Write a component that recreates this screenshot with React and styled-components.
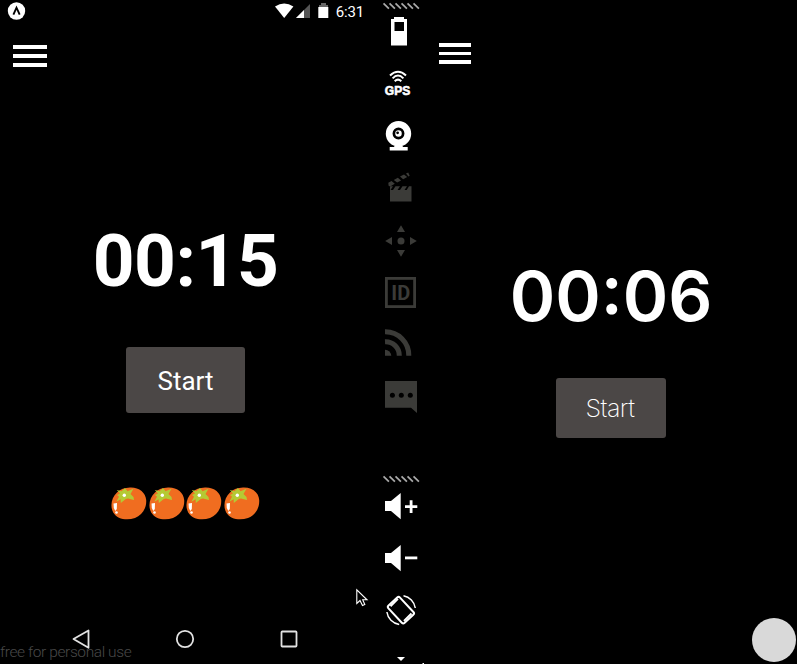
import React from "react";
import styled, { createGlobalStyle } from "styled-components";

const Global = createGlobalStyle`
  * { box-sizing: border-box; }
  body { margin: 0; background: #000; overflow: hidden; }
  svg { display: block; overflow: visible; }
`;

const Desktop = styled.main`
  position: relative;
  display: grid;
  grid-template-columns: 371px 54px 372px;
  width: 797px;
  height: 664px;
  overflow: hidden;
  background: #000;
  color: #fff;
  font-family: Roboto, sans-serif;
`;

const Phone = styled.section`
  display: flex;
  flex-direction: column;
  align-items: center;
  min-width: 0;
`;

const StatusBar = styled.header`
  display: flex;
  justify-content: space-between;
  width: 100%;
  height: 22px;
  padding: 0 7px;
`;

const StatusGroup = styled.div`
  display: flex;
`;

const Clock = styled.span`
  margin-left: 7px;
  font-size: 15px;
  line-height: 24px;
  letter-spacing: -0.15px;
`;

const MenuButton = styled.button`
  display: flex;
  flex-direction: column;
  align-self: flex-start;
  gap: ${(p) => p.$gap}px;
  width: ${(p) => p.$width}px;
  margin: ${(p) => p.$top}px 0 0 ${(p) => p.$left}px;
  padding: 0;
  border: 0;
  background: none;
`;

const MenuLine = styled.span`
  height: 3.7px;
  background: #fff;
`;

const Timer = styled.div`
  margin-top: ${(p) => p.$top}px;
  height: 74px;
  line-height: 74px;
  font-family: ${(p) => p.$font}, sans-serif;
  font-size: ${(p) => p.$size}px;
  font-weight: ${(p) => p.$weight};
  letter-spacing: ${(p) => p.$spacing};
  white-space: nowrap;
`;

const StartButton = styled.button`
  width: ${(p) => p.$width}px;
  height: ${(p) => p.$height}px;
  margin-top: ${(p) => p.$top}px;
  padding: ${(p) => p.$pad};
  border: 0;
  border-radius: 3px;
  background: #4b4746;
  color: #fff;
  font-family: ${(p) => p.$font}, sans-serif;
  font-size: ${(p) => p.$size}px;
  font-weight: ${(p) => p.$weight};
  letter-spacing: ${(p) => p.$spacing}px;
`;

const Tomatoes = styled.div`
  display: flex;
  gap: 1.5px;
  height: 33px;
  margin-top: 74px;
`;

const NavBar = styled.nav`
  display: flex;
  justify-content: space-between;
  width: 228px;
  height: 20px;
  margin: 109px 1px 0 0;
`;

const Watermark = styled.span`
  position: absolute;
  left: 0;
  bottom: 2px;
  color: #484848;
  font-size: 15.5px;
  font-weight: 300;
  line-height: 20px;
  letter-spacing: -0.4px;
  white-space: nowrap;
`;

const Toolbar = styled.aside`
  display: flex;
  flex-direction: column;
  min-width: 0;
`;

const GripSvg = styled.svg`
  flex: none;
  margin-top: ${(p) => p.$top || 0}px;
`;

const Cell = styled.svg.attrs({ width: 54, height: 52, viewBox: "0 0 54 52" })`
  flex: none;
  color: ${(p) => (p.$dim ? "#3b3b38" : "#fff")};
  fill: currentColor;
`;

const AssistiveTouch = styled.div`
  position: absolute;
  right: 1px;
  bottom: 2px;
  width: 44px;
  height: 44px;
  border-radius: 50%;
  background: #d9d9d9;
`;

const Cursor = styled.svg`
  position: absolute;
  left: 356px;
  top: 589px;
`;

const Menu = (props) => (
  <MenuButton aria-label="Menu" {...props}>
    <MenuLine />
    <MenuLine />
    <MenuLine />
  </MenuButton>
);

const Grip = ({ top, height }) => (
  <GripSvg $top={top} width="54" height={height} viewBox={`0 0 54 ${height}`}>
    {[0, 1, 2, 3, 4, 5].map((i) => (
      <path key={i} d={`M${12.5 + i * 6} 3.3l5.4 5.4`} stroke="#aaa" strokeWidth="1.7" />
    ))}
  </GripSvg>
);

const Tomato = () => (
  <svg width="36" height="33" viewBox="0 0 36 33">
    <path d="M19 .5C28 .1 34.7 5.500 35.200 13C35.700 21.500 31 28 24 31C15.500 34 6 32 2.200 25.500C-1.200 19 .5 10.500 6 5.500C9.500 2.200 13.500 .8 19 .5Z" fill="#f06d20" />
    <path d="M5.800 3L10.500 4.300L14 1L16.500 4.200L22.500 1.800L19.500 7L22.500 10L23 13L17 11.400L14.800 12L9.800 16L9.600 12.300L5.300 14.800L8 9.800L6 8L9 6.500Z" fill="#b5c934" />
    <circle cx="13.300" cy="8.200" r="1.700" fill="#fff" />
    <path d="M2.500 16.500L6 16L5.800 22L4.300 24L2.800 21Z" fill="#fff" />
    <circle cx="5.500" cy="25.500" r="1.300" fill="#fff" />
  </svg>
);

const Speaker = () => <path d="M14 21h6l9.7-8v26.3l-9.7-8.3h-6z" />;

export default function App() {
  return (
    <>
      <Global />
      <Desktop>
        <Phone>
          <StatusBar>
            <svg width="19" height="22" viewBox="0 0 19 22">
              <circle cx="9.5" cy="11" r="8.7" fill="#fff" />
              <path d="M6.4 14.6L9.5 7.7L12.7 14.6" fill="none" stroke="#000" strokeWidth="1.9" />
            </svg>
            <StatusGroup>
              <svg width="54" height="22" viewBox="0 0 54 22" fill="#fff">
                <path d="M0 6.500Q9.200 .5 18.400 6.500L9.200 18Z" />
                <path d="M35 4V18H21Z" fill="#555" />
                <path d="M29 10V18H21Z" />
                <path d="M46 3h5v2h2v3H44V5h2z" fill="#666" />
                <path d="M43.300 7h10v11h-10z" />
              </svg>
              <Clock>6:31</Clock>
            </StatusGroup>
          </StatusBar>
          <Menu $top={23} $left={13} $width={34} $gap={5.3} />
          <Timer $top={157} $font="Roboto" $size={73} $weight={700} $spacing="-0.5px">00:15</Timer>
          <StartButton $width={119} $height={66} $top={49} $pad="3px 0 0" $font="Roboto" $size={26} $weight={400} $spacing={0}>
            Start
          </StartButton>
          <Tomatoes>
            <Tomato />
            <Tomato />
            <Tomato />
            <Tomato />
          </Tomatoes>
          <NavBar>
            <svg width="20" height="20" viewBox="0 0 20 20" fill="none" stroke="#e2e2e2" strokeWidth="1.8" strokeLinejoin="round">
              <path d="M2.500 10L17.500 1.500V18.800Z" />
            </svg>
            <svg width="20" height="20" viewBox="0 0 20 20" fill="none" stroke="#e2e2e2" strokeWidth="1.8">
              <circle cx="10" cy="10" r="8.2" />
            </svg>
            <svg width="20" height="20" viewBox="0 0 20 20" fill="none" stroke="#e2e2e2" strokeWidth="1.8">
              <rect x="2.500" y="2.500" width="15" height="15" rx=".8" />
            </svg>
          </NavBar>
        </Phone>

        <Toolbar>
          <Grip height={6} />
          <Cell>
            <path fillRule="evenodd" d="M23 11h10v2h3v26.500H20V13h3zM23.500 16v9H33v-9z" />
          </Cell>
          <Cell>
            <g fill="none" stroke="currentColor" strokeWidth="2">
              <path d="M19 17.500Q27 10 35 17.500" />
              <path d="M21.600 20.400Q27 14.800 32.400 20.400" />
              <path d="M23.700 23.200Q27 20 30.300 23.200" />
            </g>
            <text x="26.500" y="36.500" textAnchor="middle" fontFamily="Liberation Sans, sans-serif" fontWeight="700" fontSize="12" stroke="currentColor" strokeWidth=".6">GPS</text>
          </Cell>
          <Cell>
            <circle cx="27.500" cy="23.800" r="12.700" />
            <path d="M24 35h7l1 2h4.700v3.500h-18V37H23z" />
            <circle cx="27.500" cy="23.500" r="4.600" fill="#fff" stroke="#000" strokeWidth="2.700" />
            <circle cx="26.600" cy="22.800" r="1.400" fill="#000" />
          </Cell>
          <Cell $dim>
            <path d="M19 28h21.500v11.500H19z" />
            <path d="M19 24.200h3l-2.500 3.800H19zM24.500 24.200h4.500l-2.500 3.800h-4.500zM31.500 24.200h4.500l-2.500 3.800h-4.500zM38 24.200h2.500v3.800h-4.800z" />
            <path d="M17.300 20.800l3.200-1.700 3.300 2.700-4.700 2.700-1.500-.8zM22.800 17.900l4-2.100 3.300 2.600-4 2.200zM29 14.600l4-2.100 3.200 2.600-4 2.200zM35 11.600l2.200-1.100 1.500 3.300-1.300.7z" />
          </Cell>
          <Cell $dim>
            <circle cx="30" cy="26.900" r="3.500" />
            <path d="M30 11.300l4 6.700h-8zM30 42.700l4-6.700h-8zM14.200 26.900l6.800-4v8zM45.800 26.900l-6.800-4v8z" />
          </Cell>
          <Cell $dim>
            <rect x="15.400" y="12.400" width="28.200" height="28.200" fill="none" stroke="currentColor" strokeWidth="2.800" />
            <text x="29.800" y="33.800" textAnchor="middle" fontFamily="Roboto, sans-serif" fontWeight="700" fontSize="20">ID</text>
          </Cell>
          <Cell $dim>
            <path d="M14 31.700a6.300 6.300 0 0 1 6.300 6h-6.300z" />
            <path d="M14 23.700A13.700 13.700 0 0 1 28.300 37.700M14 13.700A23.500 23.500 0 0 1 37.800 37.700" fill="none" stroke="currentColor" strokeWidth="5" />
          </Cell>
          <Cell $dim>
            <path d="M14 11h32v32l-6-5.300H14z" />
            <g fill="#000">
              <circle cx="21.400" cy="25.300" r="2.500" />
              <circle cx="30.300" cy="25.300" r="2.500" />
              <circle cx="39.300" cy="25.300" r="2.500" />
            </g>
          </Cell>
          <Grip top={51} height={7} />
          <Cell>
            <Speaker />
            <path d="M34 25.200h4.700v-5h2.800v5h4.800v2.800h-4.800v5h-2.800v-5H34z" />
          </Cell>
          <Cell>
            <Speaker />
            <path d="M34 24.500h12.300v2.800H34z" />
          </Cell>
          <Cell>
            <g fill="none" stroke="currentColor">
              <rect x="22" y="14.300" width="15.800" height="23.600" rx="2" strokeWidth="2" transform="rotate(-43 30 26.100)" />
              <path d="M19.500 22.300l7.400-7.400M33 37l7.500-7.500" strokeWidth="2" />
              <path d="M32.500 11.800A14.500 14.500 0 0 1 44.300 24M28.200 40.500A14.500 14.500 0 0 1 15.900 28" strokeWidth="1.5" />
            </g>
          </Cell>
          <svg width="54" height="28" viewBox="0 0 54 28" fill="#fff">
            <path d="M26 21h8l-4 4zM51.500 27h1.500v1h-1.500z" />
          </svg>
        </Toolbar>

        <Phone>
          <Menu $top={43} $left={14} $width={32} $gap={5} />
          <Timer $top={195} $font="Inter" $size={69} $weight={600} $spacing="normal">00:06</Timer>
          <StartButton $width={110} $height={60} $top={45} $pad="0 2px 0 0" $font="Inter" $size={25} $weight={200} $spacing={-0.5}>
            Start
          </StartButton>
        </Phone>
        <Watermark>free for personal use</Watermark>
        <AssistiveTouch />
        <Cursor width="12" height="18" viewBox="0 0 12 18">
          <path d="M.8 .8V14.500L4 11.500L6.500 16.500L8.800 15.500L6.700 10.800H11Z" fill="#000" stroke="#fff" strokeWidth="1.1" />
        </Cursor>
      </Desktop>
    </>
  );
}
